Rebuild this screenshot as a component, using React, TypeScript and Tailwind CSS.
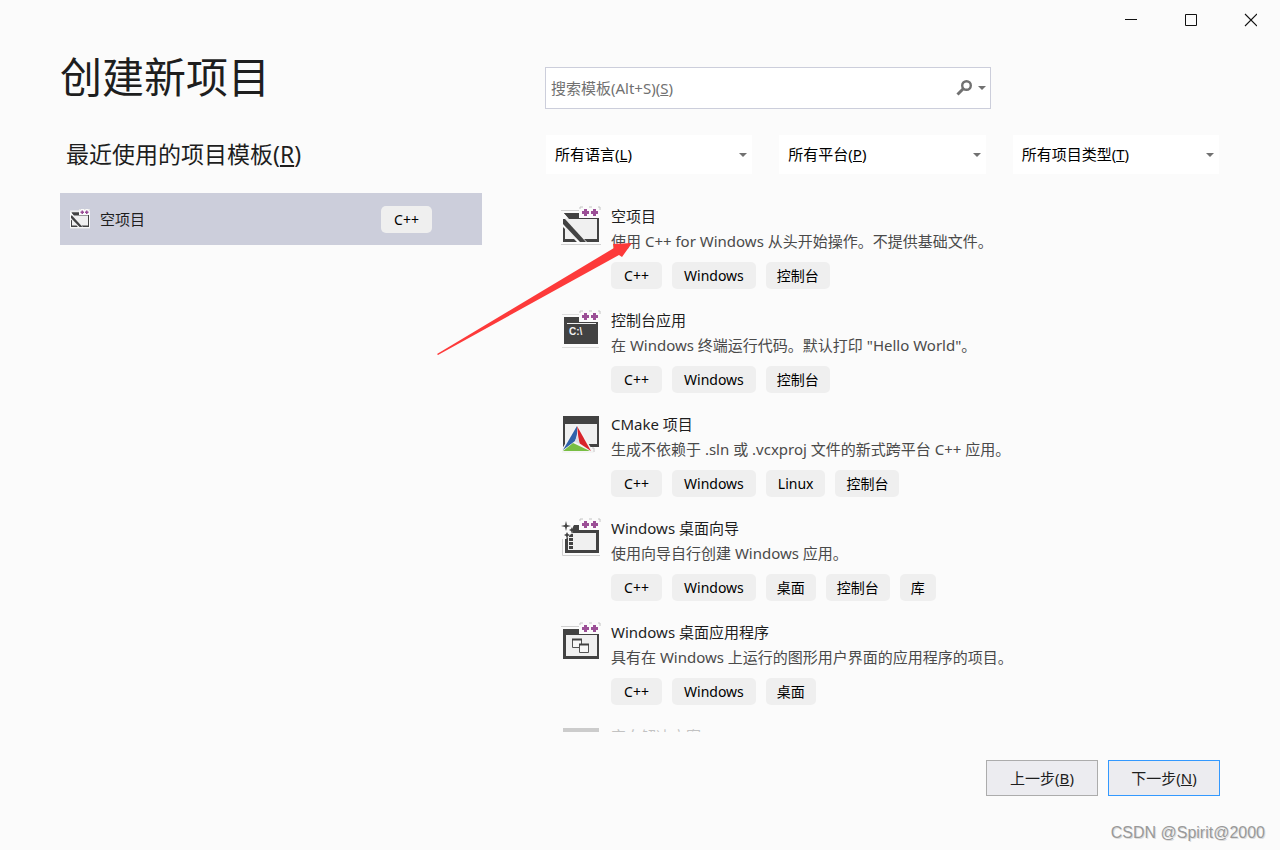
import type { ReactNode } from "react";

type Template = {
  title: string;
  description: string;
  tags: string[];
  icon: ReactNode;
};

type FilterProps = {
  id: string;
  label: string;
  hotkey: string;
  options: string[];
};

function PlusPlus() {
  return (
    <>
      <path d="M18 0h22v12H18z" fill="#fbfbfb" />
      <path d="M19 3V1h3M28 1h3M37 1h2v3" fill="none" stroke="#c4c4c4" />
      <path
        d="M23 3h3v2h2v3h-2v2h-3V8h-2V5h2zM32 3h3v2h2v3h-2v2h-3V8h-2V5h2z"
        fill="#9b4f96"
      />
    </>
  );
}

function EmptyProjectIcon({ className = "size-10" }: { className?: string }) {
  return (
    <svg viewBox="0 0 40 40" className={className} aria-hidden="true">
      <path d="M0 3h40v36H0z" fill="#fbfbfb" />
      <path d="M0 4.5h19M0 38.5h40" stroke="#d0d0d0" />
      <path d="M4 12h33v22H4z" fill="#f0f0f0" />
      <path d="M3 7h15l2 5h18v1H8z" fill="#424242" />
      <path d="M3 7h15v5H8z" fill="#424242" />
      <path d="M36 12h2v24H26l-3-3h13z" fill="#424242" />
      <path d="M2 21l2 2v10h9l3 3H2z" fill="#424242" />
      <path d="M2 13h2l21 23h-6L2 18z" fill="#424242" />
      <PlusPlus />
    </svg>
  );
}

function ConsoleIcon() {
  return (
    <svg viewBox="0 0 40 40" className="size-10" aria-hidden="true">
      <path d="M1 4.5h18M1 37.5h37" stroke="#dedede" />
      <path d="M3 7h34v27H3z" fill="#424242" />
      <path d="M6 13.5h29" stroke="#f0f0f0" />
      <text
        x="8"
        y="25"
        fill="#f0f0f0"
        className="font-['Liberation_Sans',sans-serif] text-[10px] font-bold"
      >
        C:\
      </text>
      <PlusPlus />
    </svg>
  );
}

function CMakeIcon() {
  return (
    <svg viewBox="0 0 40 40" className="size-10" aria-hidden="true">
      <path d="M2 2h36v31H2z" fill="#424242" />
      <path d="M4 10h32v20H4z" fill="#f0f0f0" />
      <path d="M16 10L1 35v4h32z" fill="#f4f4f4" />
      <path d="M16 12L2 36l12-9 2-5z" fill="#2f62ab" />
      <path d="M16 12l2 17 12 8z" fill="#d8232a" />
      <path d="M12 29L2 37h27z" fill="#78be43" />
      <path d="M16 20l-2 8 5 2z" fill="#dcdee6" />
      <path d="M31 34h2v4" fill="none" stroke="#c4c4c4" />
    </svg>
  );
}

function WizardIcon() {
  return (
    <svg viewBox="0 0 40 40" className="size-10" aria-hidden="true">
      <path d="M1.5 3v34.5H39" fill="none" stroke="#d0d0d0" />
      <path d="M13 7h6l2 5h17v23H4V18h3z" fill="#424242" />
      <path d="M7 15h28v17H7z" fill="#f0f0f0" />
      <path d="M10 16v15" stroke="#424242" strokeWidth="4" strokeDasharray="3 1" />
      <path d="M0 3h12v11L5 21H0z" fill="#fbfbfb" />
      <path
        d="M5 3l1 4 4 1-4 1-1 4-1-4-4-1 4-1zM11 9l1 2 2 1-2 1-1 3-1-3-2-1 2-1zM6 14l1 2 2 1-2 1-1 3-1-3-2-1 2-1z"
        fill="#424242"
      />
      <PlusPlus />
    </svg>
  );
}

function DesktopAppIcon() {
  return (
    <svg viewBox="0 0 40 40" className="size-10" aria-hidden="true">
      <path d="M0 4.5h19" stroke="#d0d0d0" />
      <path d="M2 7h36v30H2z" fill="#424242" />
      <path d="M5 13h31v21H5z" fill="#f0f0f0" />
      <path d="M11.5 17.5h9v8h-9z" fill="#f8f8f8" stroke="#555" />
      <path d="M11 17.5h10" stroke="#424242" strokeWidth="2" />
      <path d="M18.5 22.5h9v8h-9z" fill="#f8f8f8" stroke="#555" />
      <path d="M18 22.5h10" stroke="#424242" strokeWidth="2" />
      <PlusPlus />
    </svg>
  );
}

function SolutionIcon() {
  return (
    <svg viewBox="0 0 40 40" className="size-10" aria-hidden="true">
      <path d="M2 2h36v31H2z" fill="#424242" />
      <path d="M4 10h32v20H4z" fill="#f0f0f0" />
    </svg>
  );
}

const templates: Template[] = [
  {
    title: "空项目",
    description: "使用 C++ for Windows 从头开始操作。不提供基础文件。",
    tags: ["C++", "Windows", "控制台"],
    icon: <EmptyProjectIcon />,
  },
  {
    title: "控制台应用",
    description: '在 Windows 终端运行代码。默认打印 "Hello World"。',
    tags: ["C++", "Windows", "控制台"],
    icon: <ConsoleIcon />,
  },
  {
    title: "CMake 项目",
    description: "生成不依赖于 .sln 或 .vcxproj 文件的新式跨平台 C++ 应用。",
    tags: ["C++", "Windows", "Linux", "控制台"],
    icon: <CMakeIcon />,
  },
  {
    title: "Windows 桌面向导",
    description: "使用向导自行创建 Windows 应用。",
    tags: ["C++", "Windows", "桌面", "控制台", "库"],
    icon: <WizardIcon />,
  },
  {
    title: "Windows 桌面应用程序",
    description: "具有在 Windows 上运行的图形用户界面的应用程序的项目。",
    tags: ["C++", "Windows", "桌面"],
    icon: <DesktopAppIcon />,
  },
];

function Tag({ text }: { text: string }) {
  const isLatin = /^[A-Z]/.test(text);

  return (
    <span
      className={`rounded-[5px] bg-[#efefef] text-center text-sm leading-[27px] text-black ${
        isLatin ? "min-w-[51px] px-3" : "px-[11px]"
      }`}
    >
      {text}
    </span>
  );
}

function Caret() {
  return (
    <svg viewBox="0 0 8 4" className="h-1 w-2" aria-hidden="true">
      <path d="M0 0h8L4 4z" fill="#717171" />
    </svg>
  );
}

function Filter({ id, label, hotkey, options }: FilterProps) {
  return (
    <div className="relative flex-1 bg-white">
      <select id={id} className="block h-[39px] w-full appearance-none bg-transparent px-[9px]">
        <option value="" />
        {options.map((option) => (
          <option key={option}>{option}</option>
        ))}
      </select>
      <label
        htmlFor={id}
        className="pointer-events-none absolute inset-0 flex items-center justify-between pr-[5px] pl-[9px] text-black"
      >
        <span>
          {label}(<u>{hotkey}</u>)
        </span>
        <Caret />
      </label>
    </div>
  );
}

function TemplateRow({ title, description, tags, icon }: Template) {
  return (
    <li className="flex h-[104px] shrink-0 gap-[10px]">
      {icon}
      <div className="min-w-0 whitespace-nowrap">
        <h3 className="h-[23px] leading-5">{title}</h3>
        <p className="h-[25px] leading-6 text-[#4a4a4a]">{description}</p>
        <div className="mt-2 flex gap-[10px]">
          {tags.map((tag) => (
            <Tag key={tag} text={tag} />
          ))}
        </div>
      </div>
    </li>
  );
}

function TitleBar() {
  return (
    <header className="flex h-10 shrink-0 justify-end">
      <button aria-label="最小化" className="grid w-[60px] place-items-center">
        <svg viewBox="0 0 14 14" className="size-[14px]">
          <path d="M2 6.5h12" stroke="#111" />
        </svg>
      </button>
      <button aria-label="最大化" className="grid w-[60px] place-items-center">
        <svg viewBox="0 0 14 14" className="size-[14px]">
          <path d="M2.5 1.5h11v11h-11z" fill="none" stroke="#111" />
        </svg>
      </button>
      <button aria-label="关闭" className="grid w-[60px] place-items-center">
        <svg viewBox="0 0 14 14" className="size-[14px]">
          <path d="M2 1l12 12M14 1L2 13" stroke="#111" strokeWidth="1.1" />
        </svg>
      </button>
    </header>
  );
}

function RecentPanel() {
  return (
    <aside className="w-[422px] shrink-0">
      <h1 className="mt-[7px] text-[42px] leading-[60px]">创建新项目</h1>
      <h2 className="mt-[30px] pl-[6px] text-[23px] leading-[34px]">
        最近使用的项目模板(<u>R</u>)
      </h2>
      <button className="mt-[22px] flex h-[52px] w-full items-center bg-[#cccedb] pr-[50px] pl-[10px] text-left">
        <EmptyProjectIcon className="size-5" />
        <span className="ml-[10px] flex-1">空项目</span>
        <Tag text="C++" />
      </button>
    </aside>
  );
}

function SearchBox() {
  return (
    <div className="relative mt-[27px] w-[446px]">
      <input
        id="search"
        type="text"
        className="block h-[42px] w-full border border-[#cccedb] bg-white px-[5px]"
      />
      <label
        htmlFor="search"
        className="pointer-events-none absolute inset-0 flex items-center pr-[5px] pl-[6px] text-[#717171]"
      >
        <span className="flex-1">
          搜索模板(Alt+S)(<u>S</u>)
        </span>
        <svg viewBox="0 0 16 16" className="mr-[6px] size-4" aria-hidden="true">
          <circle cx="10.5" cy="5.5" r="4.3" fill="none" stroke="#717171" strokeWidth="2.4" />
          <path d="M7.500 8.500L1.500 14.500" stroke="#717171" strokeWidth="3" />
        </svg>
        <Caret />
      </label>
    </div>
  );
}

export default function App() {
  return (
    <div className="relative flex h-screen flex-col overflow-hidden bg-[#fbfbfb] font-['Noto_Sans','Noto_Sans_CJK_SC',sans-serif] text-[15px] text-[#1e1e1e]">
      <TitleBar />

      <main className="flex min-h-0 flex-1 gap-[63px] px-[60px]">
        <RecentPanel />

        <section className="flex min-w-0 flex-1 flex-col">
          <SearchBox />

          <div className="mt-[26px] flex gap-[27px] px-px">
            <Filter id="language" label="所有语言" hotkey="L" options={["C++", "C#"]} />
            <Filter id="platform" label="所有平台" hotkey="P" options={["Windows", "Linux"]} />
            <Filter id="type" label="所有项目类型" hotkey="T" options={["控制台", "桌面"]} />
          </div>

          <ul className="mt-8 flex min-h-0 flex-1 flex-col overflow-hidden pl-4">
            {templates.map((template) => (
              <TemplateRow key={template.title} {...template} />
            ))}
            <li className="flex shrink-0 gap-[10px] opacity-25">
              <SolutionIcon />
              <h3 className="leading-5">空白解决方案</h3>
            </li>
          </ul>
        </section>
      </main>

      <footer className="shrink-0">
        <div className="mt-7 flex justify-end gap-[10px] pr-[60px]">
          <button className="h-9 w-28 border border-[#acacac] bg-[#ececf0]">
            上一步(<u>B</u>)
          </button>
          <button className="h-9 w-28 border border-[#3399ff] bg-[#ececf0]">
            下一步(<u>N</u>)
          </button>
        </div>
        <p className="mt-[25px] mb-[5px] pr-[15px] text-right font-['Liberation_Sans',sans-serif] text-base leading-6 text-[#999] [text-shadow:1px_1px_0_#ddd]">
          CSDN @Spirit@2000
        </p>
      </footer>

      {/* arrow pointing at the first template */}
      <svg
        viewBox="0 0 196 112"
        className="pointer-events-none absolute top-[243px] left-[437px] h-[112px] w-[196px]"
        aria-hidden="true"
      >
        <path d="M0 111L177 5l-1-4 19-1-10 14-3-2L1 112z" fill="#fd3a3a" />
      </svg>
    </div>
  );
}
